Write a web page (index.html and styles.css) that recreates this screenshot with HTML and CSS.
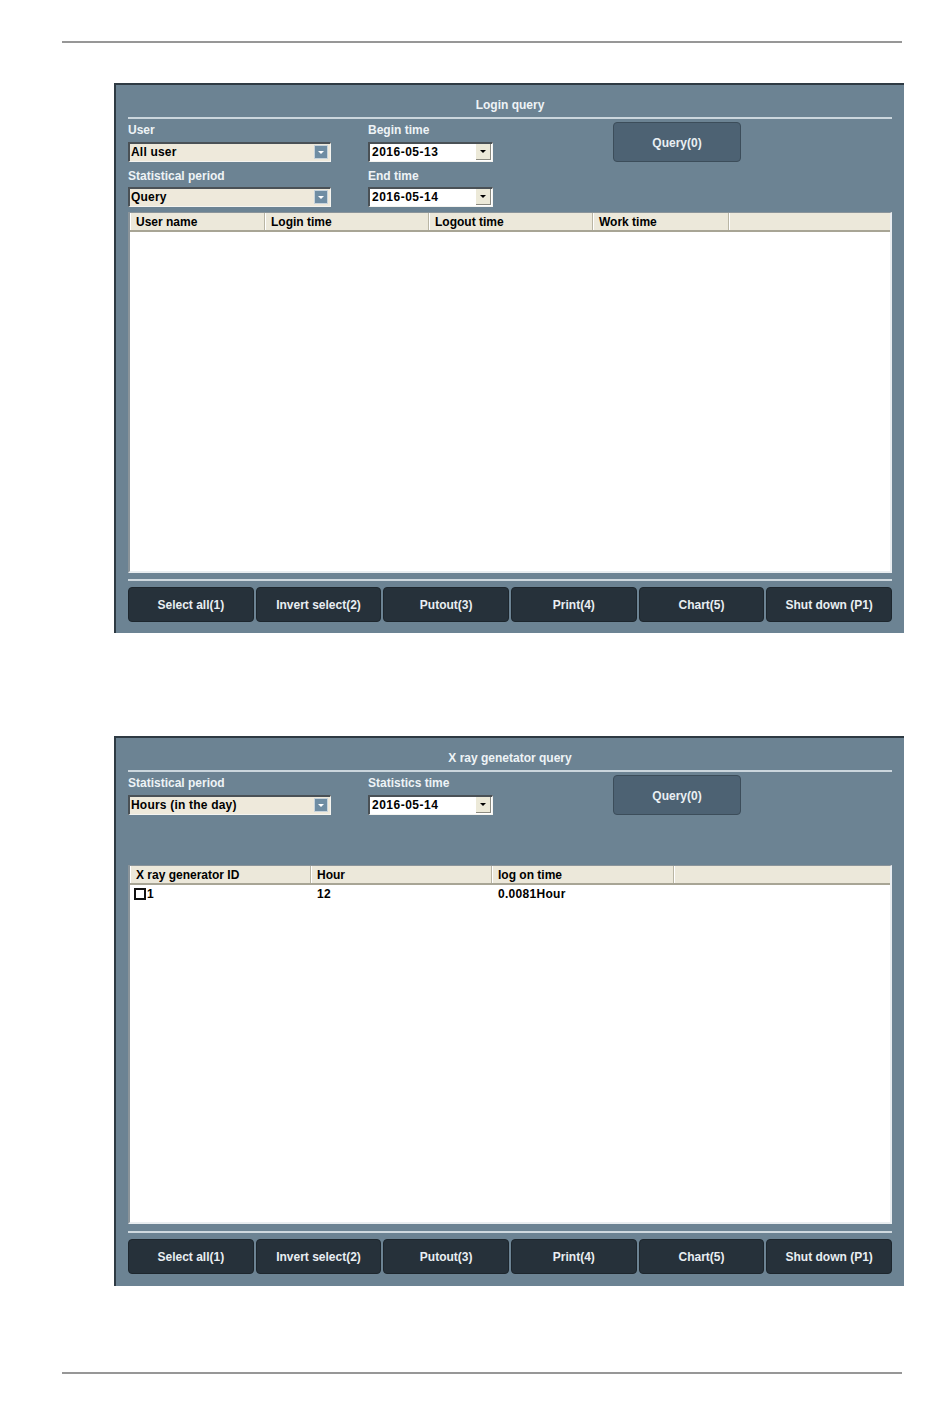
FILE: index.html
```html
<!DOCTYPE html>
<html lang="en">
<head>
<meta charset="utf-8">
<title>Query screens</title>
<link rel="stylesheet" href="styles.css">
</head>
<body>
<div class="page">
  <div class="rule rule-top"></div>

  <section class="panel panel-login">
    <h2 class="panel-title">Login query</h2>
    <div class="form">
      <div class="col col-wide">
        <div class="lbl">User</div>
        <div class="combo"><span>All user</span><i class="combo-btn"></i></div>
        <div class="lbl lbl-2">Statistical period</div>
        <div class="combo"><span>Query</span><i class="combo-btn"></i></div>
      </div>
      <div class="col col-date">
        <div class="lbl">Begin time</div>
        <div class="date"><span>2016-05-13</span><i class="date-btn"></i></div>
        <div class="lbl lbl-2">End time</div>
        <div class="date"><span>2016-05-14</span><i class="date-btn"></i></div>
      </div>
      <button class="query-btn">Query(0)</button>
    </div>
    <div class="grid grid-login">
      <div class="grid-head">
        <div class="th">User name</div>
        <div class="th">Login time</div>
        <div class="th">Logout time</div>
        <div class="th">Work time</div>
        <div class="th"></div>
      </div>
      <div class="grid-body"></div>
    </div>
    <div class="sep"></div>
    <div class="actions">
      <button class="act">Select all(1)</button>
      <button class="act">Invert select(2)</button>
      <button class="act">Putout(3)</button>
      <button class="act">Print(4)</button>
      <button class="act">Chart(5)</button>
      <button class="act">Shut down (P1)</button>
    </div>
  </section>

  <section class="panel panel-xray">
    <h2 class="panel-title">X ray genetator query</h2>
    <div class="form">
      <div class="col col-wide">
        <div class="lbl">Statistical period</div>
        <div class="combo"><span>Hours (in the day)</span><i class="combo-btn"></i></div>
      </div>
      <div class="col col-date">
        <div class="lbl">Statistics time</div>
        <div class="date"><span>2016-05-14</span><i class="date-btn"></i></div>
      </div>
      <button class="query-btn">Query(0)</button>
    </div>
    <div class="grid grid-xray">
      <div class="grid-head">
        <div class="th">X ray generator ID</div>
        <div class="th">Hour</div>
        <div class="th">log on time</div>
        <div class="th"></div>
      </div>
      <div class="grid-body">
        <div class="tr">
          <div class="td"><span class="check"></span>1</div>
          <div class="td">12</div>
          <div class="td">0.0081Hour</div>
          <div class="td"></div>
        </div>
      </div>
    </div>
    <div class="sep"></div>
    <div class="actions">
      <button class="act">Select all(1)</button>
      <button class="act">Invert select(2)</button>
      <button class="act">Putout(3)</button>
      <button class="act">Print(4)</button>
      <button class="act">Chart(5)</button>
      <button class="act">Shut down (P1)</button>
    </div>
  </section>

  <div class="rule rule-bottom"></div>
</div>
</body>
</html>
```

FILE: styles.css
```css
html, body {
  margin: 0;
  padding: 0;
  background: #ffffff;
}

body {
  width: 950px;
  height: 1420px;
  font-family: "Liberation Sans", Arial, sans-serif;
  font-size: 12px;
  font-weight: bold;
  color: #000;
}

.page {
  padding-top: 41px;
}

/* page header / footer rules */
.rule {
  margin-left: 62px;
  width: 840px;
  height: 2px;
  background: #979797;
}

.rule-bottom {
  margin-top: 86px;
}

/* application window */
.panel {
  box-sizing: border-box;
  width: 790px;
  height: 550px;
  margin-left: 114px;
  padding: 0 12px 11px 12px;
  background: #6c8393;
  border-top: 2px solid #2e3a43;
  border-left: 2px solid #2e3a43;
  display: flex;
  flex-direction: column;
}

.panel-login {
  margin-top: 40px;
}

.panel-xray {
  margin-top: 103px;
}

.panel-title {
  margin: 0;
  padding: 13px 0 5px;
  font-size: 12px;
  line-height: 14px;
  font-weight: bold;
  text-align: center;
  color: #eef3f6;
  border-bottom: 2px solid #cbd6dd;
}

/* filter area */
.form {
  margin-top: 2px;
  height: 91px;
  display: flex;
  align-items: flex-start;
}

.col {
  display: flex;
  flex-direction: column;
}

.col-wide {
  width: 203px;
}

.col-date {
  width: 125px;
  margin-left: 37px;
}

.lbl {
  box-sizing: border-box;
  height: 21px;
  padding-top: 1px;
  line-height: 16px;
  color: #eef3f6;
  white-space: nowrap;
}

.lbl-2 {
  height: 25px;
  padding-top: 6px;
}

.combo,
.date {
  box-sizing: border-box;
  height: 20px;
  display: flex;
  align-items: center;
  justify-content: space-between;
  border-top: 2px solid #4a5156;
  border-left: 2px solid #4a5156;
  border-bottom: 1px solid #f4f4f0;
  border-right: 1px solid #f4f4f0;
  padding-left: 1px;
  padding-bottom: 1px;
  line-height: 16px;
  letter-spacing: 0.2px;
}

.combo {
  background: #eee9db;
}

.date {
  background: #ffffff;
  padding-left: 2px;
  letter-spacing: 0.5px;
}

.combo-btn {
  width: 14px;
  height: 14px;
  margin-right: 2px;
  box-sizing: border-box;
  background: #6f8da3;
  border: 1px solid #c7d3db;
  display: flex;
  align-items: center;
  justify-content: center;
}

.combo-btn::after {
  content: "";
  border-left: 3px solid transparent;
  border-right: 3px solid transparent;
  border-top: 3px solid #ffffff;
}

.date-btn {
  width: 15px;
  height: 16px;
  margin-right: 1px;
  box-sizing: border-box;
  background: #ece9d8;
  border-right: 1px solid #8b8a80;
  border-bottom: 1px solid #8b8a80;
  display: flex;
  align-items: center;
  justify-content: center;
}

.date-btn::after {
  content: "";
  border-left: 3px solid transparent;
  border-right: 3px solid transparent;
  border-top: 3px solid #000000;
}

.query-btn {
  margin-left: 120px;
  margin-top: 1px;
  width: 128px;
  height: 40px;
  background: #4d6273;
  border: 1px solid #3c4d5a;
  border-radius: 4px;
  color: #e9eff3;
  font: inherit;
  font-size: 12px;
  padding: 2px 0 0;
}

/* list view */
.grid {
  box-sizing: border-box;
  height: 361px;
  display: flex;
  flex-direction: column;
  border-top: 1px solid #8a949a;
  border-left: 2px solid #8a949a;
  border-right: 2px solid #e9edf0;
  border-bottom: 2px solid #e9edf0;
  background: #ffffff;
}

.panel-xray .grid {
  height: 359px;
}

.grid-head,
.tr {
  display: grid;
}

.grid-login .grid-head {
  grid-template-columns: 135px 164px 164px 136px 1fr;
}

.grid-xray .grid-head,
.grid-xray .tr {
  grid-template-columns: 181px 181px 182px 1fr;
}

.grid-head {
  height: 19px;
  box-sizing: border-box;
  background: #ece8da;
  border-bottom: 2px solid #a8a595;
}

.th {
  box-sizing: border-box;
  padding-left: 6px;
  padding-top: 2px;
  line-height: 15px;
  border-right: 1px solid #b9b5a4;
  box-shadow: inset 1px 0 0 #ffffff;
  white-space: nowrap;
}

.th:last-child {
  border-right: none;
}

.grid-body {
  flex: 1;
  background: #ffffff;
}

.td {
  padding-left: 6px;
  line-height: 18px;
  display: flex;
  align-items: center;
  letter-spacing: 0.3px;
}

.check {
  display: inline-block;
  width: 8px;
  height: 8px;
  border: 2px solid #111;
  margin-right: 1px;
  margin-left: -2px;
}

/* command bar */
.sep {
  margin-top: 6px;
  height: 2px;
  background: #cfd9df;
}

.panel-xray .sep {
  margin-top: 7px;
}

.actions {
  margin-top: 6px;
  height: 35px;
  display: flex;
  gap: 2px;
}

.act {
  flex: 1;
  background: #26313a;
  border: 1px solid #1d262d;
  border-radius: 4px;
  color: #e9eef2;
  font: inherit;
  font-size: 12px;
  padding: 1px 0 0;
}
```
